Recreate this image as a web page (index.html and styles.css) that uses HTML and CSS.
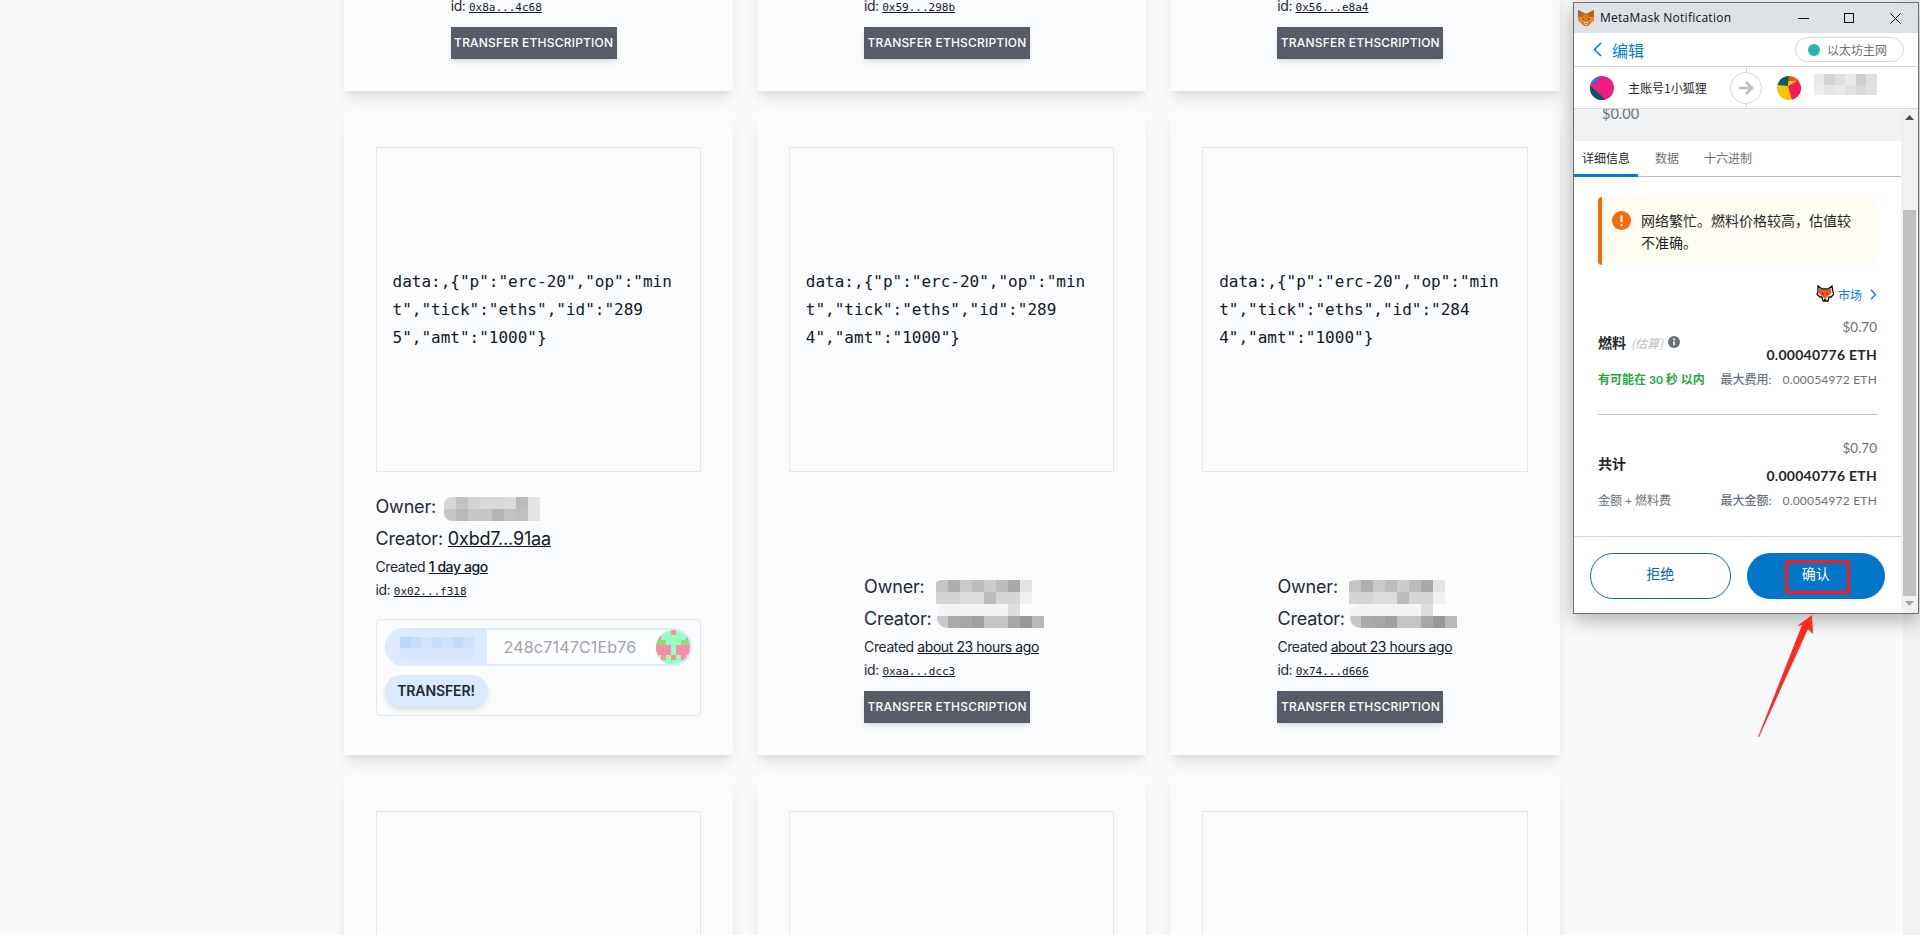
FILE: index.html
```html
<!DOCTYPE html>
<html lang="en">
<head>
<meta charset="utf-8">
<title>Ethscriptions</title>
<link rel="stylesheet" href="styles.css">
</head>
<body>
<main class="page">
  <div class="grid">
    <article class="card">
      <div class="preview"></div>
      <div class="info info-compact">
        <div class="small">id: <a class="mono" href="#">0x8a...4c68</a></div>
        <button class="dark-btn">TRANSFER ETHSCRIPTION</button>
      </div>
    </article>
    <article class="card">
      <div class="preview"></div>
      <div class="info info-compact">
        <div class="small">id: <a class="mono" href="#">0x59...298b</a></div>
        <button class="dark-btn">TRANSFER ETHSCRIPTION</button>
      </div>
    </article>
    <article class="card">
      <div class="preview"></div>
      <div class="info info-compact">
        <div class="small">id: <a class="mono" href="#">0x56...e8a4</a></div>
        <button class="dark-btn">TRANSFER ETHSCRIPTION</button>
      </div>
    </article>

    <article class="card">
      <div class="preview"><p class="data">data:,{"p":"erc-20","op":"mint","tick":"eths","id":"2895","amt":"1000"}</p></div>
      <div class="info info-wide">
        <div class="line">Owner:
          <svg class="blur blur-own-wide" width="96" height="24" viewBox="0 0 8 2" shape-rendering="crispEdges"><rect width="1" height="1" fill="#d6d6d6"/><rect x="1" width="1" height="1" fill="#c3c3c3"/><rect x="2" width="1" height="1" fill="#d4d4d4"/><rect x="3" width="2" height="1" fill="#d9d9d9"/><rect x="5" width="1" height="1" fill="#dcdcdc"/><rect x="6" width="1" height="1" fill="#bbb"/><rect x="7" width="1" height="1" fill="#e4e4e4"/><rect y="1" width="1" height="1" fill="#c6c6c6"/><rect x="1" y="1" width="1" height="1" fill="#b8b8b8"/><rect x="2" y="1" width="2" height="1" fill="#c5c6c5"/><rect x="4" y="1" width="1" height="1" fill="#b4b4b4"/><rect x="5" y="1" width="1" height="1" fill="#c2c2c2"/><rect x="6" y="1" width="1" height="1" fill="#c0c0c0"/><rect x="7" y="1" width="1" height="1" fill="#e4e4e4"/></svg>
        </div>
        <div class="line">Creator: <a href="#">0xbd7...91aa</a></div>
        <div class="small">Created <a class="strong" href="#">1 day ago</a></div>
        <div class="small">id: <a class="mono" href="#">0x02...f318</a></div>
        <form class="panel">
          <div class="address">
            <div class="address-label">
              <svg width="84" height="21" viewBox="0 0 7 2" shape-rendering="crispEdges"><rect width="1" height="1" fill="#bdd6fb"/><rect x="1" width="1" height="1" fill="#c8dcfb"/><rect x="2" width="1" height="1" fill="#d3e3fb"/><rect x="3" width="1" height="1" fill="#c8dcfb"/><rect x="4" width="1" height="1" fill="#d0e1fb"/><rect x="5" width="1" height="1" fill="#c6dafa"/><rect x="6" width="1" height="1" fill="#cfe0fb"/><rect y="1" width="7" height="1" fill="#d7e6fc"/></svg>
            </div>
            <div class="address-value">248c7147C1Eb76</div>
            <div class="blockie">
              <svg width="35" height="35" viewBox="0 0 7 7" shape-rendering="crispEdges"><rect width="7" height="7" fill="#93ffc4"/><rect x="3" width="1" height="1" fill="#fb8da0"/><rect y="1" width="1" height="1" fill="#fb8da0"/><rect x="6" y="1" width="1" height="1" fill="#fb8da0"/><rect y="2" width="2" height="1" fill="#8fdc78"/><rect x="5" y="2" width="2" height="1" fill="#8fdc78"/><rect y="3" width="3" height="1" fill="#fb8da0"/><rect x="4" y="3" width="3" height="1" fill="#fb8da0"/><rect y="4" width="2" height="1" fill="#fb8da0"/><rect x="2" y="4" width="1" height="1" fill="#fb8da0"/><rect x="4" y="4" width="3" height="1" fill="#fb8da0"/><rect x="1" y="5" width="1" height="1" fill="#fb8da0"/><rect x="3" y="5" width="1" height="1" fill="#fb8da0"/><rect x="5" y="5" width="1" height="1" fill="#fb8da0"/></svg>
            </div>
          </div>
          <button class="pill-btn" type="button">TRANSFER!</button>
        </form>
      </div>
    </article>
    <article class="card">
      <div class="preview"><p class="data">data:,{"p":"erc-20","op":"mint","tick":"eths","id":"2894","amt":"1000"}</p></div>
      <div class="info">
        <div class="line">Owner:
          <svg class="blur blur-own" width="100" height="24" viewBox="0 0 100 24" shape-rendering="crispEdges"><rect x="4" width="12" height="12" fill="#c4c4c4"/><rect x="16" width="12" height="12" fill="#aeaeae"/><rect x="28" width="12" height="12" fill="#c8c9c8"/><rect x="40" width="12" height="12" fill="#bcbcbc"/><rect x="52" width="12" height="12" fill="#cccccc"/><rect x="64" width="12" height="12" fill="#bcbcbc"/><rect x="76" width="12" height="12" fill="#a9a9a9"/><rect x="88" width="12" height="12" fill="#e4e4e4"/><rect x="4" y="12" width="24" height="12" fill="#d4d4d4"/><rect x="28" y="12" width="24" height="12" fill="#dcdcdc"/><rect x="52" y="12" width="12" height="12" fill="#bcbcbc"/><rect x="64" y="12" width="24" height="12" fill="#d6d6d6"/><rect x="88" y="12" width="12" height="12" fill="#f0f0f0"/></svg>
        </div>
        <div class="line">Creator:
          <svg class="blur blur-cre" width="107" height="24" viewBox="0 0 107 24" shape-rendering="crispEdges"><rect width="71" height="12" fill="#f3f4f5"/><rect x="71" width="12" height="12" fill="#dcdddd"/><rect y="12" width="11" height="12" fill="#c8c8c8"/><rect x="11" y="12" width="12" height="12" fill="#aaaaaa"/><rect x="23" y="12" width="12" height="12" fill="#a8a8a8"/><rect x="35" y="12" width="12" height="12" fill="#a0a0a0"/><rect x="47" y="12" width="24" height="12" fill="#c4c4c4"/><rect x="71" y="12" width="12" height="12" fill="#a8a8a8"/><rect x="83" y="12" width="12" height="12" fill="#989898"/><rect x="95" y="12" width="12" height="12" fill="#b8b8b8"/></svg>
        </div>
        <div class="small">Created <a href="#">about 23 hours ago</a></div>
        <div class="small">id: <a class="mono" href="#">0xaa...dcc3</a></div>
        <button class="dark-btn">TRANSFER ETHSCRIPTION</button>
      </div>
    </article>
    <article class="card">
      <div class="preview"><p class="data">data:,{"p":"erc-20","op":"mint","tick":"eths","id":"2844","amt":"1000"}</p></div>
      <div class="info">
        <div class="line">Owner:
          <svg class="blur blur-own" width="100" height="24" viewBox="0 0 100 24" shape-rendering="crispEdges"><rect x="4" width="12" height="12" fill="#c4c4c4"/><rect x="16" width="12" height="12" fill="#aeaeae"/><rect x="28" width="12" height="12" fill="#c8c9c8"/><rect x="40" width="12" height="12" fill="#bcbcbc"/><rect x="52" width="12" height="12" fill="#cccccc"/><rect x="64" width="12" height="12" fill="#bcbcbc"/><rect x="76" width="12" height="12" fill="#a9a9a9"/><rect x="88" width="12" height="12" fill="#e4e4e4"/><rect x="4" y="12" width="24" height="12" fill="#d4d4d4"/><rect x="28" y="12" width="24" height="12" fill="#dcdcdc"/><rect x="52" y="12" width="12" height="12" fill="#bcbcbc"/><rect x="64" y="12" width="24" height="12" fill="#d6d6d6"/><rect x="88" y="12" width="12" height="12" fill="#f0f0f0"/></svg>
        </div>
        <div class="line">Creator:
          <svg class="blur blur-cre" width="107" height="24" viewBox="0 0 107 24" shape-rendering="crispEdges"><rect width="71" height="12" fill="#f3f4f5"/><rect x="71" width="12" height="12" fill="#dcdddd"/><rect y="12" width="11" height="12" fill="#c8c8c8"/><rect x="11" y="12" width="12" height="12" fill="#aaaaaa"/><rect x="23" y="12" width="12" height="12" fill="#a8a8a8"/><rect x="35" y="12" width="12" height="12" fill="#a0a0a0"/><rect x="47" y="12" width="24" height="12" fill="#c4c4c4"/><rect x="71" y="12" width="12" height="12" fill="#a8a8a8"/><rect x="83" y="12" width="12" height="12" fill="#989898"/><rect x="95" y="12" width="12" height="12" fill="#b8b8b8"/></svg>
        </div>
        <div class="small">Created <a href="#">about 23 hours ago</a></div>
        <div class="small">id: <a class="mono" href="#">0x74...d666</a></div>
        <button class="dark-btn">TRANSFER ETHSCRIPTION</button>
      </div>
    </article>

    <article class="card"><div class="preview"></div></article>
    <article class="card"><div class="preview"></div></article>
    <article class="card"><div class="preview"></div></article>
  </div>
</main>
<div class="page-scrollbar"></div>

<section class="popup">
  <header class="titlebar">
    <svg class="fox-title" width="16" height="16" viewBox="0 0 16 16"><path d="M0 0l6 3h4l6-3 0 7 0 3-3 3-3 3H6l-3-3-3-3 0-3z" fill="#e2761b"/><path d="M0 0l6 3-1 4H0zM16 0l-6 3 1 4h5z" fill="#a8662c"/><path d="M1 7h4l1 5-3 0-3-2zM15 7h-4l-1 5 3 0 3-2z" fill="#f6851b"/><path d="M4 8l2 1-1 1zM12 8l-2 1 1 1z" fill="#33241a"/><path d="M6 12h4l-1 3H7z" fill="#ead9c6"/><path d="M7 13h2l-1 1z" fill="#33241a"/></svg>
    <span class="title-text">MetaMask Notification</span>
    <div class="win-controls">
      <svg width="11" height="11" viewBox="0 0 11 11"><path d="M0 5.500h11" stroke="#111" fill="none"/></svg>
      <svg width="11" height="11" viewBox="0 0 11 11"><rect x=".5" y=".5" width="9" height="9" stroke="#111" fill="none"/></svg>
      <svg width="11" height="11" viewBox="0 0 11 11"><path d="M.5.5l10 10M10.500.5l-10 10" stroke="#111" fill="none"/></svg>
    </div>
  </header>
  <div class="edit-row">
    <svg class="back" width="9" height="15" viewBox="0 0 9 15"><path d="M8 1L1.500 7.500 8 14" stroke="#037dd6" stroke-width="1.600" fill="none"/></svg>
    <span class="edit-text">编辑</span>
    <div class="network"><i class="net-dot"></i>以太坊主网</div>
  </div>
  <div class="account-row">
    <svg class="avatar" width="24" height="24" viewBox="0 0 24 24"><rect width="24" height="24" fill="#f01d80"/><path d="M0 9.500L16 24H0z" fill="#03595d"/><path d="M0 0h11L5 7 0 9.500z" fill="#2b73de"/><path d="M0 8l3-1-3 3z" fill="#f4511e"/></svg>
    <span class="from-name">主账号1小狐狸</span>
    <div class="arrow-wrap">
      <svg width="32" height="32" viewBox="0 0 32 32"><circle cx="16" cy="16" r="15.500" fill="#fff" stroke="#d6d9dc"/><path d="M9 16h13M16 10l6 6-6 6" stroke="#bbc0c5" stroke-width="2.600" fill="none"/></svg>
    </div>
    <svg class="avatar" width="24" height="24" viewBox="0 0 24 24"><rect width="24" height="24" fill="#f7c500"/><path d="M11 10L21 4l3 6v14H15z" fill="#f2195f"/><path d="M0 9L5 0h7l-1 10z" fill="#0a5b70"/><path d="M12 0h8l2 5H12z" fill="#f4511e"/><path d="M12 5h8l-9 5z" fill="#f7c500"/></svg>
    <svg class="to-name" width="72" height="21" viewBox="0 0 6 2" shape-rendering="crispEdges"><rect width="1" height="1" fill="#e8e9e9"/><rect x="1" width="1" height="1" fill="#d2d3d3"/><rect x="2" width="1" height="1" fill="#dedfdf"/><rect x="3" width="1" height="1" fill="#e8e9e9"/><rect x="4" width="1" height="1" fill="#cecfcf"/><rect x="5" width="1" height="1" fill="#dedfdf"/><rect y="1" width="1" height="1" fill="#eeeeee"/><rect x="1" y="1" width="1" height="1" fill="#e4e5e5"/><rect x="2" y="1" width="1" height="1" fill="#e8e9e9"/><rect x="3" y="1" width="1" height="1" fill="#e0e1e1"/><rect x="4" y="1" width="1" height="1" fill="#d8d9d9"/><rect x="5" y="1" width="1" height="1" fill="#e0e1e1"/></svg>
  </div>
  <div class="pop-body">
    <div class="pop-col">
      <div class="fiat"><span>$0.00</span></div>
      <nav class="tabs">
        <span class="tab tab-active">详细信息</span>
        <span class="tab">数据</span>
        <span class="tab">十六进制</span>
      </nav>
      <div class="details">
        <div class="alert">
          <svg width="19" height="19" viewBox="0 0 19 19"><circle cx="9.500" cy="9.500" r="9.500" fill="#f66a0a"/><path d="M9.500 4.500v6.500" stroke="#fff" stroke-width="2.200"/><circle cx="9.500" cy="14" r="1.300" fill="#fff"/></svg>
          <p>网络繁忙。燃料价格较高，估值较不准确。</p>
        </div>
        <div class="market">
          <svg width="18" height="18" viewBox="0 0 18 18"><path d="M2 1l4 3h6l4-3 1 6 1 2-3 3h-2l-1 4H7l-1-4H4L1 9l1-2z" fill="#fff" stroke="#111" stroke-width="1.300"/><path d="M3 3l3 2h6l3-2 .5 5-6.500 6-6.500-6z" fill="#ef5a14"/><path d="M6 8l1.500 1M12 8l-1.500 1" stroke="#111"/><path d="M8 14h2v2H8z" fill="#111"/></svg>
          <span class="market-text">市场</span>
          <svg width="7" height="11" viewBox="0 0 7 11"><path d="M1 .8l4.500 4.700L1 10.200" stroke="#037dd6" stroke-width="1.300" fill="none"/></svg>
        </div>
        <div class="amount-row">
          <div class="amount-label"><b>燃料</b> <em>(估算)</em>
            <svg width="12" height="12" viewBox="0 0 12 12"><circle cx="6" cy="6" r="6" fill="#6a737d"/><path d="M6 5.200v4" stroke="#fff" stroke-width="1.600"/><circle cx="6" cy="3.200" r="1" fill="#fff"/></svg>
          </div>
          <div class="amount-values"><div class="fiat-value">$0.70</div><div class="eth-value">0.00040776 ETH</div></div>
        </div>
        <div class="sub-row">
          <span class="green">有可能在 30 秒 以内</span>
          <span class="max"><b>最大费用:</b><span class="max-value">0.00054972 ETH</span></span>
        </div>
        <hr class="divider">
        <div class="amount-row amount-total">
          <div class="amount-label"><b>共计</b></div>
          <div class="amount-values"><div class="fiat-value">$0.70</div><div class="eth-value">0.00040776 ETH</div></div>
        </div>
        <div class="sub-row">
          <span>金额 + 燃料费</span>
          <span class="max"><b>最大金额:</b><span class="max-value">0.00054972 ETH</span></span>
        </div>
      </div>
      <footer class="actions">
        <button class="reject">拒绝</button>
        <button class="confirm">确认<span class="red-box"></span></button>
      </footer>
    </div>
    <div class="pop-scrollbar">
      <svg width="9" height="5" viewBox="0 0 9 5"><path d="M4.500 0L9 5H0z" fill="#505050"/></svg>
      <div class="pop-thumb"></div>
      <svg width="9" height="5" viewBox="0 0 9 5"><path d="M0 0h9L4.500 5z" fill="#a3a3a3"/></svg>
    </div>
  </div>
</section>

<svg class="red-arrow" width="70" height="130" viewBox="0 0 70 130"><path d="M59 2L44 13l5-1L5 124l1 0L55 16l5 5z" fill="#ff2a1f"/></svg>
</body>
</html>
```
FILE: styles.css
```css
* { box-sizing: border-box; }
html, body { margin: 0; height: 935px; overflow: hidden; }
body {
  display: flex;
  background: #f9fafb;
  color: #1f2937;
  font-family: Inter, "Noto Sans", sans-serif;
}
a { color: #111827; text-decoration: underline; }
p { margin: 0; }

.page { flex: 1; min-width: 0; height: 935px; overflow: hidden; }
.page-scrollbar { width: 17px; background: #f1f1f1; }

.grid {
  display: grid;
  grid-template-columns: repeat(3, minmax(0, 1fr));
  grid-auto-rows: 640px;
  gap: 24px;
  width: 1216px;
  margin: -549px auto 0;
}
.card {
  display: flex;
  flex-direction: column;
  padding: 32px;
  background: #fafbfd;
  box-shadow: 0 10px 15px -3px rgba(0, 0, 0, .1), 0 4px 6px -2px rgba(0, 0, 0, .05);
}
.preview {
  display: flex;
  align-items: center;
  flex: none;
  aspect-ratio: 1 / 1;
  padding: 0 16px;
  border: 1px solid #e5e7eb;
}
.data {
  width: 288px;
  font: 16px/28px "DejaVu Sans Mono", "Liberation Mono", monospace;
  color: #111827;
  word-break: break-all;
}
.info {
  align-self: center;
  margin-top: auto;
  display: flex;
  flex-direction: column;
}
.info-compact { width: 175px; }
.info-wide { align-self: stretch; margin-top: 21px; }
.line { position: relative; height: 28px; margin-bottom: 4px; font-size: 18px; line-height: 28px; letter-spacing: -.18px; color: #1f2937; }
.small { font-size: 14px; line-height: 20px; margin-bottom: 3px; letter-spacing: -.42px; color: #1f2937; }
.strong { font-weight: 500; }
.mono { font-family: "DejaVu Sans Mono", monospace; font-size: 11px; letter-spacing: 0; }
.blur { position: absolute; }
.blur-own-wide { left: 68px; top: 4px; border-radius: 8px 0 0 8px; }
.blur-own { left: 68px; top: 7px; border-radius: 10px 0 0 4px; }
.blur-cre { left: 73px; top: -1px; border-radius: 10px 0 0 10px; }
.dark-btn {
  align-self: flex-start;
  width: 166px;
  height: 32px;
  margin-top: 6px;
  padding: 0;
  border: 0;
  background: #585c68;
  color: #fff;
  font: 500 12px/32px Inter, sans-serif;
  letter-spacing: .2px;
  white-space: nowrap;
  box-shadow: 0 4px 6px -1px rgba(0, 0, 0, .1), 0 2px 4px -1px rgba(0, 0, 0, .06);
}
.panel {
  margin-top: 14px;
  height: 97px;
  padding: 8px;
  border: 1px solid #e5e7eb;
  border-radius: 4px;
}
.address {
  display: flex;
  align-items: center;
  height: 38px;
  border: 2px solid #dbeafe;
  border-radius: 19px;
  background: #fff;
  overflow: hidden;
}
.address-label {
  display: flex;
  align-items: center;
  justify-content: center;
  flex: none;
  width: 100px;
  height: 100%;
  background: #dbeafe;
}
.address-value { flex: 1; padding-left: 17px; font-size: 16px; letter-spacing: .2px; color: #9ca3af; }
.blockie { flex: none; width: 35px; height: 35px; margin-right: -1px; border-radius: 50%; overflow: hidden; }
.blockie svg { display: block; }
.pill-btn {
  display: block;
  width: 103px;
  height: 32px;
  margin-top: 9px;
  padding: 0;
  border: 0;
  border-radius: 16px;
  background: #dbeafe;
  color: #1f2937;
  font: 600 14px/32px Inter, sans-serif;
  letter-spacing: -.1px;
  box-shadow: 0 4px 6px -1px rgba(0, 0, 0, .1), 0 2px 4px -1px rgba(0, 0, 0, .06);
}

/* MetaMask window */
.popup {
  position: absolute;
  left: 1573px;
  top: 2px;
  width: 346px;
  height: 612px;
  display: flex;
  flex-direction: column;
  border: 1px solid #6e7072;
  background: #fff;
  box-shadow: 0 6px 20px rgba(0, 0, 0, .3);
  font-family: Lato, "Noto Sans CJK SC", sans-serif;
  color: #24272a;
}
.titlebar { display: flex; align-items: center; flex: none; height: 30px; padding-left: 4px; background: #dee1e6; }
.fox-title { flex: none; }
.title-text { margin: -2px 0 0 6px; font: 12px "Open Sans", sans-serif; letter-spacing: .25px; color: #111; }
.win-controls { display: flex; gap: 35px; margin-left: auto; margin-right: 17px; }
.win-controls svg { display: block; }
.edit-row { display: flex; align-items: center; flex: none; height: 33px; padding-left: 19px; }
.edit-text { margin-left: 10px; font: 16px "Noto Sans CJK SC", sans-serif; color: #037dd6; }
.network {
  display: flex;
  align-items: center;
  margin-left: auto;
  margin-right: 14px;
  width: 109px;
  height: 25px;
  padding-left: 12px;
  border: 1px solid #d6d9dc;
  border-radius: 13px;
  font: 12px "Noto Sans CJK SC", sans-serif;
  color: #6a737d;
}
.net-dot { width: 12px; height: 12px; margin-right: 7px; border-radius: 50%; background: #29b6af; }
.account-row {
  display: flex;
  align-items: center;
  flex: none;
  height: 43px;
  padding-left: 16px;
  border-top: 1px solid #d6d9dc;
  border-bottom: 1px solid #d6d9dc;
}
.avatar { flex: none; border-radius: 50%; }
.from-name { width: 102px; padding-left: 14px; font: 12px "Noto Sans CJK SC", sans-serif; white-space: nowrap; flex: none; }
.arrow-wrap { display: flex; align-items: center; align-self: stretch; flex: none; margin: 0 15px 0 14px; background: linear-gradient(#d6d9dc, #d6d9dc) center / 1px 100% no-repeat; }
.to-name { margin-left: 8px; margin-top: -6px; border-radius: 6px 0 0 6px; }
.pop-body { display: flex; flex: 1; min-height: 0; }
.pop-col { display: flex; flex-direction: column; width: 327px; flex: none; }
.pop-scrollbar { display: flex; flex-direction: column; align-items: center; flex: none; width: 17px; padding-top: 6px; background: #f1f1f1; }
.pop-thumb { width: 13px; flex: none; height: 386px; margin: 90px 0 5px; background: #c1c1c1; }
.fiat { flex: none; height: 32px; padding-left: 28px; background: #f2f3f4; overflow: hidden; font-size: 14.5px; line-height: 16px; color: #6a737d; }
.fiat span { display: block; margin-top: -3px; }
.tabs { display: flex; gap: 9px; flex: none; height: 36px; border-bottom: 1px solid #bbc0c5; background: #fff; }
.tab { padding: 0 8px; font: 12px/34px "Noto Sans CJK SC", sans-serif; color: #6a737d; }
.tab-active { height: 36px; border-bottom: 3px solid #037dd6; color: #24272a; }
.details { flex: 1; padding: 20px 24px 0; }
.alert {
  display: flex;
  align-items: center;
  gap: 10px;
  height: 68px;
  padding: 0 14px 0 10px;
  border-left: 4px solid #f66a0a;
  border-radius: 4px;
  background: #fefcf0;
  font: 14px/22px "Noto Sans CJK SC", sans-serif;
  color: #24272a;
}
.alert svg { flex: none; align-self: flex-start; margin-top: 14px; }
.market { display: flex; align-items: center; justify-content: flex-end; height: 18px; margin-top: 20px; gap: 4px; color: #037dd6; }
.market-text { margin-right: 4px; font: 12px "Noto Sans CJK SC", sans-serif; }
.amount-row { display: flex; align-items: center; justify-content: space-between; margin-top: 16px; }
.amount-total { margin-top: 25px; }
.amount-label { display: flex; align-items: center; gap: 5px; font-size: 14px; }
.amount-label b { font: 700 14px "Noto Sans CJK SC", sans-serif; }
.amount-label em { font: italic 12px "Noto Sans CJK SC", sans-serif; color: #bbc0c5; }
.amount-values { text-align: right; }
.fiat-value { font-size: 13.500px; line-height: 16px; color: #6a737d; }
.eth-value { margin-top: 10px; font-size: 14px; font-weight: 700; line-height: 20px; letter-spacing: .25px; color: #24272a; }
.sub-row { display: flex; align-items: center; justify-content: space-between; height: 18px; margin-top: 6px; font: 12px/18px Lato, "Noto Sans CJK SC", sans-serif; color: #6a737d; }
.green { color: #28a745; font-weight: 700; }
.max b { font-weight: 500; }
.max-value { margin-left: 11px; letter-spacing: .2px; }
.divider { height: 1px; margin: 25px 0 0; border: 0; background: #bbc0c5; }
.actions { display: flex; gap: 16px; flex: none; height: 77px; padding: 16px 16px 14px; border-top: 1px solid #d6d9dc; }
.reject, .confirm { flex: 1; height: 46px; padding: 0 0 6px; border-radius: 23px; font: 14px "Noto Sans CJK SC", sans-serif; }
.reject { border: 1px solid #0a6ab0; background: #fff; color: #0a6ab0; }
.confirm { position: relative; border: 0; background: #0376c9; color: #fff; }
.red-box { position: absolute; left: 38px; top: 7px; width: 65px; height: 34px; border: 3px solid #ff1a1a; border-radius: 2px; }
.red-arrow { position: absolute; left: 1753px; top: 613px; }
```
